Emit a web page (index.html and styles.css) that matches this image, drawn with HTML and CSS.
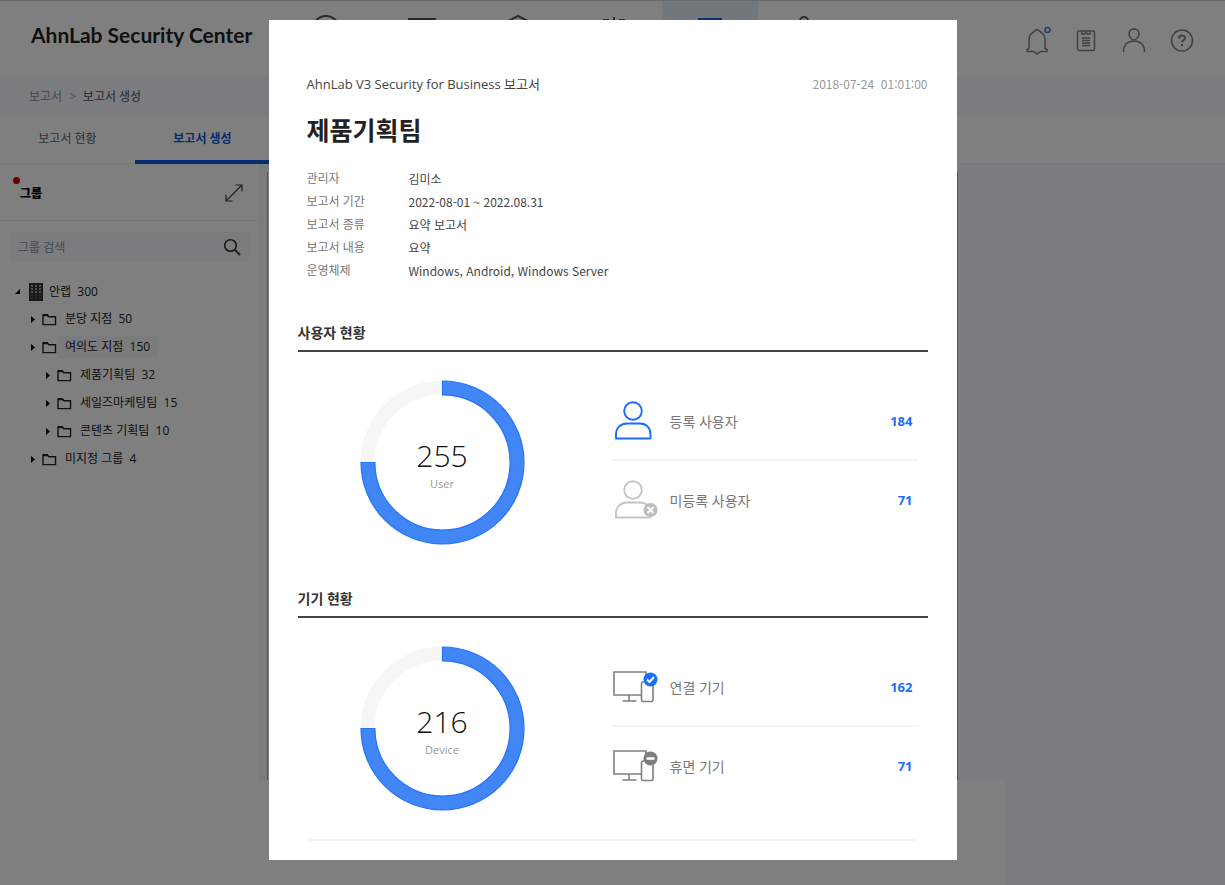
FILE: index.html
```html
<!DOCTYPE html>
<html lang="ko">
<head>
<meta charset="utf-8">
<title>AhnLab Security Center</title>
<link rel="stylesheet" href="styles.css">
</head>
<body>
<svg class="defs" aria-hidden="true">
  <symbol id="folder" viewBox="0 0 16 14"><path d="M1 12.500V2h4.600l1.600 2H14.500v8.500z" fill="none" stroke="#222" stroke-width="1.500"/><path d="M1 1h5l1.500 2.500H1z" fill="#222"/></symbol>
  <symbol id="monitor" viewBox="0 0 46 34"><g fill="none" stroke="#808080" stroke-width="1.600"><path d="M29 25H2V2h32v9"/><path d="M17 25v6M10.500 31h14"/><rect x="29.500" y="12" width="11.500" height="19.500" rx="1.500" fill="#fff"/></g></symbol>
</svg>
<div class="app">
  <header class="header">
    <h1 class="logo">AhnLab Security Center</h1>
    <nav class="nav" aria-label="주 메뉴">
      <a class="nav-item" href="#" aria-label="대시보드"><svg width="32" height="32" viewBox="0 0 32 32"><circle cx="16" cy="14" r="13"/></svg></a>
      <a class="nav-item" href="#" aria-label="기기"><svg width="32" height="32" viewBox="0 0 32 32"><rect x="3" y="4" width="26" height="18"/></svg></a>
      <a class="nav-item" href="#" aria-label="보안"><svg width="32" height="32" viewBox="0 0 32 32"><path d="M16 1l12 6v14l-12 7-12-7V7z"/></svg></a>
      <a class="nav-item" href="#" aria-label="정책"><svg width="32" height="32" viewBox="0 0 32 32"><path d="M5 5h5v20M16 2v27M22 25V5h5"/></svg></a>
      <a class="nav-item nav-active" href="#" aria-label="보고서"><svg width="32" height="32" viewBox="0 0 32 32"><rect x="5" y="4" width="22" height="24"/></svg></a>
      <a class="nav-item" href="#" aria-label="관리"><svg width="32" height="32" viewBox="0 0 32 32"><circle cx="14" cy="6" r="4"/><path d="M14 10v18"/></svg></a>
    </nav>
    <div class="tools">
      <button class="tool" type="button" aria-label="알림"><svg width="28" height="30" viewBox="0 0 28 30"><path d="M3 25.500h6.500l3.500 2.500 3.500-2.500H23v-2l-2-1V13c0-4-3.500-7-8-9.500C8.500 6 5 9 5 13v9.500l-2 1z"/><circle class="dot-new" cx="23.500" cy="4" r="2.500"/></svg></button>
      <button class="tool" type="button" aria-label="작업"><svg width="28" height="30" viewBox="0 0 28 30"><rect x="5.500" y="5" width="17" height="19.500" rx="1.500"/><path d="M10 5v3h2.500l1.500-1.500L15.500 8H18V5M10 12h8M10 14.500h8M10 17h8M10 19.500h8"/></svg></button>
      <button class="tool" type="button" aria-label="계정"><svg width="28" height="30" viewBox="0 0 28 30"><path d="M14 3c3 0 5 2 5 5s-3 6-5 6-5-3-5-6 2-5 5-5z"/><path d="M3.500 26c0-7 4-11 10.500-11s10.500 4 10.500 11"/></svg></button>
      <button class="tool" type="button" aria-label="도움말"><svg width="28" height="30" viewBox="0 0 28 30"><circle cx="14" cy="14.500" r="10.500"/><path d="M11 12.500c0-4 6-4 6-.5 0 2-3 2-3 4.500M14 18v2" stroke-width="2"/></svg></button>
    </div>
  </header>
  <div class="crumbs"><span>보고서</span><span class="crumb-sep">&gt;</span><span class="crumb-now">보고서 생성</span></div>
  <nav class="tabs"><a class="tab" href="#">보고서 현황</a><a class="tab tab-active" href="#">보고서 생성</a></nav>
  <div class="body">
    <aside class="side">
      <div class="side-head"><h2 class="side-title">그룹</h2>
        <button class="plain" type="button" aria-label="확대"><svg width="20" height="20" viewBox="0 0 20 20" fill="none" stroke="#444" stroke-width="1.200"><path d="M2 18L18 2M11.500 2H18v6.500M2 11.500V18h6.500"/></svg></button></div>
      <div class="search"><input class="search-input" type="text" placeholder="그룹 검색" aria-label="그룹 검색">
        <button class="plain" type="button" aria-label="검색"><svg width="18" height="18" viewBox="0 0 18 18" fill="none" stroke="#333" stroke-width="1.600"><circle cx="7.500" cy="7.500" r="5.800"/><path d="M12 12l5 5" stroke-width="2"/></svg></button></div>
      <ul class="tree">
        <li class="node root"><svg width="7" height="7" viewBox="0 0 7 7"><path d="M6 1v5H1z"/></svg><svg width="14" height="18" viewBox="0 0 14 18"><path d="M0 0h14v18H0z" fill="#333"/><path d="M2 3h10M2 6h10M2 9h10" stroke="#ccc" stroke-width="1.500" stroke-dasharray="2 2"/><path d="M2 12h10M2 15h10" stroke="#777" stroke-width="1" stroke-dasharray="2 2"/></svg><span class="node-label">안랩&nbsp; 300</span></li>
        <li class="node"><svg width="6" height="7" viewBox="0 0 6 7"><path d="M1 0l4 3.500L1 7z"/></svg><svg width="15" height="13"><use href="#folder"/></svg><span class="node-label">분당 지점&nbsp; 50</span></li>
        <li class="node"><svg width="6" height="7" viewBox="0 0 6 7"><path d="M1 0l4 3.500L1 7z"/></svg><svg width="15" height="13"><use href="#folder"/></svg><span class="node-label node-selected">여의도 지점&nbsp; 150</span></li>
        <li class="node deep"><svg width="6" height="7" viewBox="0 0 6 7"><path d="M1 0l4 3.500L1 7z"/></svg><svg width="15" height="13"><use href="#folder"/></svg><span class="node-label">제품기획팀&nbsp; 32</span></li>
        <li class="node deep"><svg width="6" height="7" viewBox="0 0 6 7"><path d="M1 0l4 3.500L1 7z"/></svg><svg width="15" height="13"><use href="#folder"/></svg><span class="node-label">세일즈마케팅팀&nbsp; 15</span></li>
        <li class="node deep"><svg width="6" height="7" viewBox="0 0 6 7"><path d="M1 0l4 3.500L1 7z"/></svg><svg width="15" height="13"><use href="#folder"/></svg><span class="node-label">콘텐츠 기획팀&nbsp; 10</span></li>
        <li class="node"><svg width="6" height="7" viewBox="0 0 6 7"><path d="M1 0l4 3.500L1 7z"/></svg><svg width="15" height="13"><use href="#folder"/></svg><span class="node-label">미지정 그룹&nbsp; 4</span></li>
      </ul>
    </aside>
    <main class="content"><div class="sheet"></div></main>
  </div>
  <div class="below"></div>
</div>

<div class="overlay">
  <div class="report" role="dialog" aria-labelledby="report-title">
    <div class="intro">
      <div class="intro-top"><span>AhnLab V3 Security for Business 보고서</span><time class="stamp">2018-07-24&nbsp; 01:01:00</time></div>
      <h2 class="report-title" id="report-title">제품기획팀</h2>
      <dl class="facts">
        <dt>관리자</dt><dd>김미소</dd>
        <dt>보고서 기간</dt><dd>2022-08-01 ~ 2022.08.31</dd>
        <dt>보고서 종류</dt><dd>요약 보고서</dd>
        <dt>보고서 내용</dt><dd>요약</dd>
        <dt>운영체제</dt><dd>Windows, Android, Windows Server</dd>
      </dl>
    </div>
    <section class="section">
      <h3 class="section-title">사용자 현황</h3>
      <div class="stats">
        <div class="donut">
          <svg class="ring" viewBox="0 0 166 166"><circle cx="83" cy="83" r="75.500" fill="none" stroke="#f6f6f6" stroke-width="14"/><path d="M83 1A82 82 0 1 1 1 83H15A68 68 0 1 0 83 15z" fill="#4285f4" stroke="#2476fa" stroke-width="1.200"/></svg>
          <div class="donut-text"><strong class="total">255</strong><span class="unit">User</span></div>
        </div>
        <ul class="list">
          <li class="row"><svg class="row-icon" viewBox="0 0 46 42" fill="none" stroke="#1b6ef9" stroke-width="1.900"><circle cx="21" cy="11" r="8.800"/><path d="M4 38.500v-4c0-7 5-11 11-11h13c6 0 10.500 4 10.500 11v4z" stroke-linejoin="round"/></svg><span>등록 사용자</span><b class="count">184</b></li>
          <li class="row"><svg class="row-icon" viewBox="0 0 46 42" fill="none" stroke="#c6c6c6" stroke-width="1.900"><circle cx="21" cy="11" r="8.800"/><path d="M4 38.500v-4c0-7 5-11 11-11h13c6 0 10.500 4 10.500 11v4z" stroke-linejoin="round"/><circle cx="38.500" cy="31" r="7" fill="#bdbdbd" stroke="none"/><path d="M35.500 28l6 6M41.500 28l-6 6" stroke="#fff"/></svg><span>미등록 사용자</span><b class="count">71</b></li>
        </ul>
      </div>
    </section>
    <section class="section">
      <h3 class="section-title">기기 현황</h3>
      <div class="stats">
        <div class="donut">
          <svg class="ring" viewBox="0 0 166 166"><circle cx="83" cy="83" r="75.500" fill="none" stroke="#f6f6f6" stroke-width="14"/><path d="M83 1A82 82 0 1 1 1 83H15A68 68 0 1 0 83 15z" fill="#4285f4" stroke="#2476fa" stroke-width="1.200"/></svg>
          <div class="donut-text"><strong class="total">216</strong><span class="unit">Device</span></div>
        </div>
        <ul class="list">
          <li class="row"><svg class="row-icon" viewBox="0 0 46 34"><use href="#monitor"/><circle cx="38.500" cy="9.500" r="7" fill="#1b6ef9"/><path d="M35 9.500l2.500 2.500 4.500-5" fill="none" stroke="#fff" stroke-width="2"/></svg><span>연결 기기</span><b class="count">162</b></li>
          <li class="row"><svg class="row-icon" viewBox="0 0 46 34"><use href="#monitor"/><circle cx="38.500" cy="9.500" r="7" fill="#7d7d7d"/><path d="M34.500 9.500h8" stroke="#fff" stroke-width="2.500"/></svg><span>휴면 기기</span><b class="count">71</b></li>
        </ul>
      </div>
    </section>
    <hr class="end">
  </div>
</div>
</body>
</html>
```
FILE: styles.css
```css
* { box-sizing: border-box; }
body { margin: 0; font-family: "Open Sans", "Noto Sans CJK KR", sans-serif; font-size: 12px; color: #444; }
h1, h2, h3, ul, dl, dd { margin: 0; padding: 0; }
ul { list-style: none; }
a { color: inherit; text-decoration: none; }
button { border: 0; padding: 0; background: none; }
svg { display: block; flex: none; }
.defs { position: absolute; width: 0; height: 0; }

.app { display: flex; flex-direction: column; height: 100vh; overflow: hidden; background: #f7f8fb; }
.header { display: flex; height: 76px; background: #fff; border-top: 1px solid #d2d2d2; }
.logo { flex: none; width: 278px; padding: 17px 0 0 31px; font: 700 21px/34px Lato, sans-serif; color: #222; white-space: nowrap; }
.nav { display: flex; }
.nav-item { display: flex; justify-content: center; width: 96px; padding-top: 14px; }
.nav-item svg { fill: none; stroke: #555; stroke-width: 2; }
.nav-active { background: #e6f0ff; }
.nav-active svg { stroke: #1b5ce0; }
.tools { display: flex; gap: 20px; margin-left: auto; padding: 25px 29px 0 0; }
.tool { height: 30px; }
.tool svg { fill: none; stroke: #7c8284; stroke-width: 1.5; }
.tool .dot-new { stroke: #3d7cf0; }

.crumbs { display: flex; align-items: center; height: 40px; padding-left: 29px; color: #8f9299; }
.crumb-sep { margin: 0 7px 0 8px; font-size: 10px; }
.crumb-now { color: #4c5166; }
.tabs { display: flex; flex: none; height: 48px; background: #fff; border-bottom: 1px solid #f3f3f5; }
.tab { width: 135px; height: 48px; line-height: 46px; text-align: center; color: #5d6468; }
.tab-active { border-bottom: 4px solid #0d5ae0; color: #0d5ae0; font-weight: 700; }

.body { display: flex; flex: 1; }
.side { width: 260px; background: #fff; border-right: 1px solid #f3f3f5; }
.side-head { display: flex; align-items: center; justify-content: space-between; height: 57px; padding: 2px 15px 0 20px; border-bottom: 1px solid #f0f0f2; }
.side-title { position: relative; font-size: 12px; font-weight: 900; color: #000; }
.side-title::before { content: ""; position: absolute; top: -7px; left: -7px; width: 7px; height: 7px; border-radius: 50%; background: #d40000; }
.search { display: flex; align-items: center; height: 30px; margin: 11px 10px 16px; padding: 0 8px; background: #f6f8fb; }
.search-input { flex: 1; min-width: 0; border: 0; padding: 0; background: none; font: inherit; }
.search-input::placeholder { color: #8c9296; opacity: 1; }
.node { display: flex; align-items: center; height: 28px; padding-left: 30px; color: #222; }
.node svg + svg { margin-left: 6px; }
.node-label { margin-left: 1px; padding: 0 7px; line-height: 22px; }
.node-selected { background: #f4f7fb; }
.root { height: 27px; padding-left: 14px; }
.root svg + svg { margin-left: 8px; }
.root .node-label { padding: 0 5px; }
.deep { padding-left: 45px; }
.content { flex: 1; padding: 8px 267px 0 7px; }
.sheet { height: 100%; background: #fff; border: solid #aaa; border-width: 0 1px; }
.below { flex: none; width: 82%; height: 105px; background: #fff; }

.overlay { position: absolute; inset: 0; display: flex; justify-content: center; align-items: flex-start; padding-top: 20px; background: rgba(0, 0, 0, .5); }
.report { width: 688px; max-width: 100%; padding: 52px 29px 19px; background: #fff; }
.intro { padding-left: 9px; }
.intro-top { display: flex; justify-content: space-between; font-size: 13px; line-height: 24px; }
.stamp { font-family: "Noto Sans CJK KR", sans-serif; font-size: 12px; color: #999; }
.report-title { margin-top: 16px; font-size: 25px; line-height: 36px; color: #222; }
.facts { display: grid; grid-template-columns: 102px 1fr; margin-top: 19px; line-height: 23px; }
.facts dt { color: #777; }
.facts dd { font-family: "Noto Sans CJK KR", sans-serif; }
.section { margin-top: 42px; }
.intro + .section { margin-top: 39px; }
.section-title { padding-bottom: 5px; border-bottom: 2px solid #444; font-size: 14px; line-height: 24px; color: #333; }
.stats { display: flex; align-items: flex-start; gap: 87px; padding: 28px 10px 0 62px; }
.donut { display: grid; place-items: center; }
.ring { width: 165px; height: 165px; }
.ring, .donut-text { grid-area: 1 / 1; }
.donut-text { display: flex; flex-direction: column; align-items: center; padding-top: 6px; }
.total { font-size: 30px; font-weight: 300; line-height: 36px; color: #111; }
.unit { line-height: 20px; color: #999; font-size: 11px; }
.list { flex: 1; padding-top: 2px; }
.row { display: flex; align-items: center; gap: 12px; height: 77px; padding-right: 5px; font-size: 14px; color: #777; }
.row + .row { height: 79px; border-top: 2px solid #f4f5f6; }
.row-icon { width: 46px; }
.count { margin-left: auto; font-size: 13px; color: #1b6ef9; }
.end { height: 2px; margin: 28px 10px 0 9px; border: 0; background: #f3f3f8; }
```
